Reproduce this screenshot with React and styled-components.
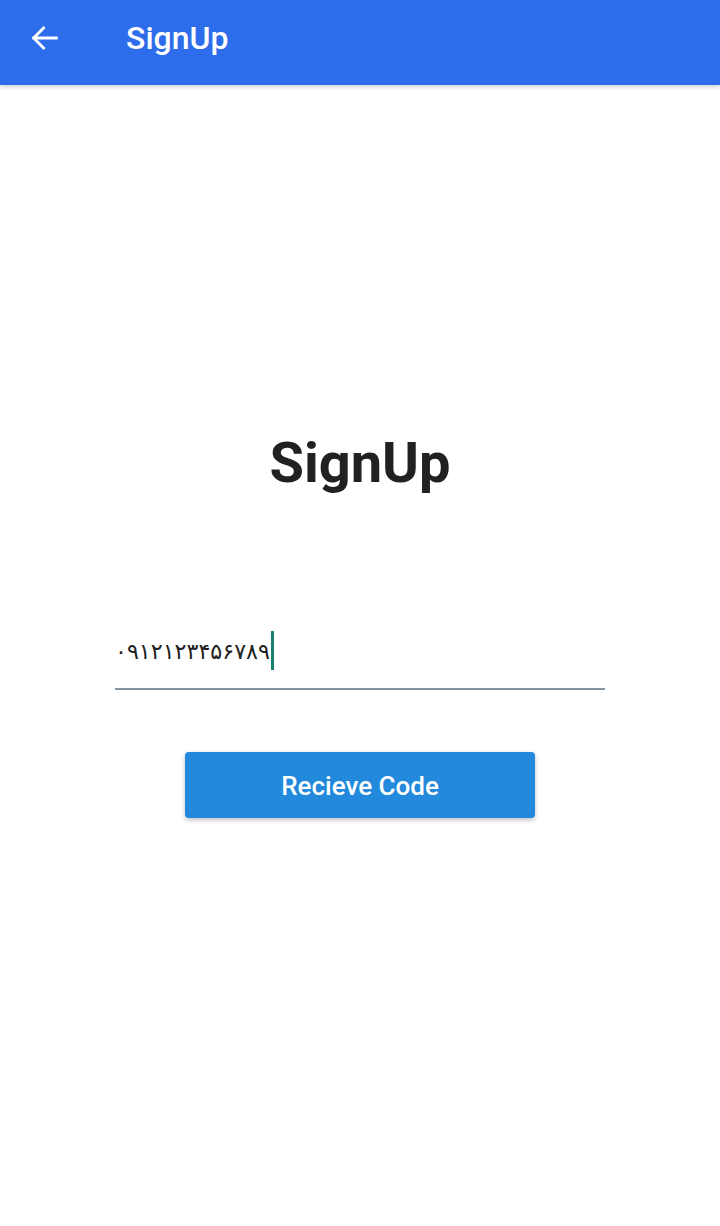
import React from "react";
import styled, { createGlobalStyle } from "styled-components";

const Global = createGlobalStyle`
  html, body { margin: 0; padding: 0; background: #ffffff; }
  body { font-family: Roboto, "Noto Sans", sans-serif; }
`;

const Page = styled.div`
  width: 720px;
  min-height: 1226px;
  display: flex;
  flex-direction: column;
  background: #ffffff;
`;

const Toolbar = styled.header`
  height: 85px;
  background: #2d6deb;
  display: flex;
  align-items: center;
  padding-left: 28px;
  gap: 64px;
  box-shadow: 0 2px 4px rgba(0, 0, 0, 0.18);
  position: relative;
  z-index: 1;
`;

const BackButton = styled.button`
  border: 0;
  background: transparent;
  padding: 0;
  width: 34px;
  height: 34px;
  display: flex;
  align-items: center;
  justify-content: center;
  color: #fff;
  margin-top: -10px;
`;

const ToolbarTitle = styled.h1`
  margin: -9px 0 0 0;
  color: #ffffff;
  font-family: Roboto, sans-serif;
  font-weight: 500;
  font-size: 32px;
`;

const Content = styled.main`
  display: flex;
  flex-direction: column;
  align-items: center;
  padding-top: 338px;
`;

const Heading = styled.h2`
  margin: 0;
  font-family: Roboto, sans-serif;
  font-weight: 700;
  font-size: 56px;
  line-height: 80px;
  color: #212121;
`;

const Field = styled.div`
  margin-top: 128px;
  width: 490px;
  border-bottom: 2px solid #8494a3;
  height: 57px;
  display: flex;
  align-items: flex-start;
`;

const Value = styled.span`
  font-family: "DejaVu Sans", sans-serif;
  font-size: 22.2px;
  color: #222;
  line-height: 40px;
  direction: ltr;
  unicode-bidi: isolate;
`;

const Caret = styled.span`
  width: 3px;
  height: 39px;
  background: #1b7f6f;
  margin-left: 1px;
`;

const Button = styled.button`
  margin-top: 62px;
  width: 350px;
  height: 66px;
  border: 0;
  border-radius: 4px;
  background: #2289dc;
  color: #ffffff;
  font-family: Roboto, sans-serif;
  font-weight: 500;
  font-size: 26px;
  padding-top: 2px;
  box-shadow: 0 2px 5px rgba(0, 0, 0, 0.25);
`;

export default function App() {
  return (
    <Page>
      <Global />
      <Toolbar>
        <BackButton aria-label="back">
          <svg width="34" height="34" viewBox="0 0 24 24" fill="none">
            <path d="M20 12H4M11 5l-7 7 7 7" stroke="#fff" strokeWidth="2" strokeLinecap="square" />
          </svg>
        </BackButton>
        <ToolbarTitle>SignUp</ToolbarTitle>
      </Toolbar>
      <Content>
        <Heading>SignUp</Heading>
        <Field>
          <Value>۰۹۱۲۱۲۳۴۵۶۷۸۹</Value>
          <Caret />
        </Field>
        <Button>Recieve Code</Button>
      </Content>
    </Page>
  );
}
